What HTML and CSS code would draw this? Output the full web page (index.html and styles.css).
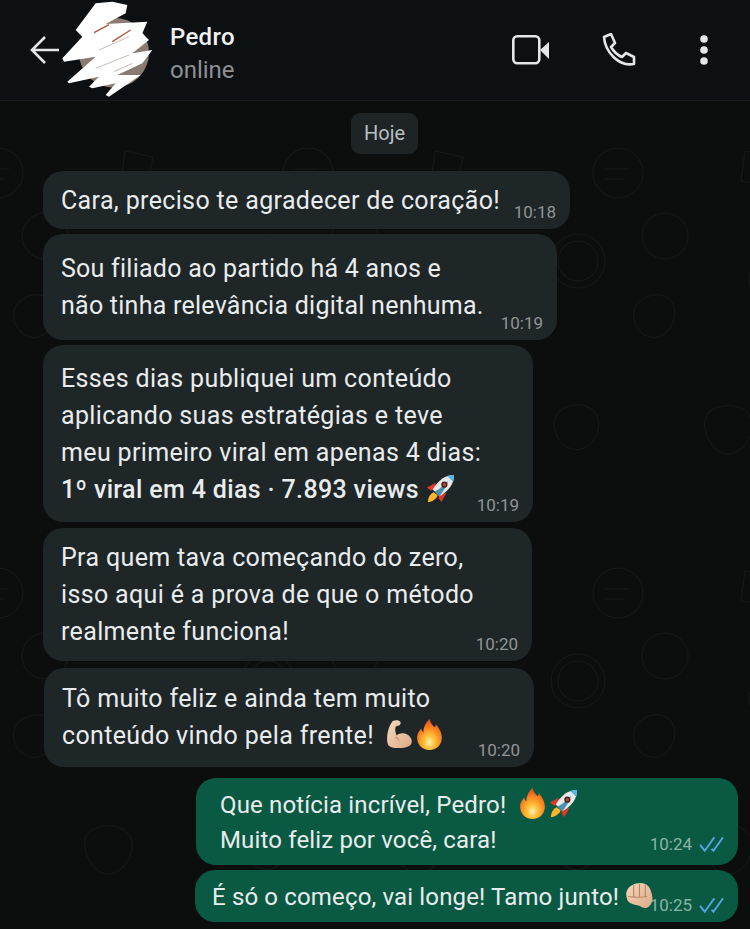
FILE: index.html
```html
<!DOCTYPE html>
<html lang="pt-BR">
<head>
    <meta charset="UTF-8">
    <meta name="viewport" content="width=device-width, initial-scale=1.0">
    <title>Pedro</title>
    <link rel="stylesheet" href="styles.css">
</head>
<body>
    <svg width="0" height="0" class="defs">
        <defs>
            <radialGradient id="flame" cx="50%" cy="75%" r="70%">
                <stop offset="0" stop-color="#fff0b0"/>
                <stop offset="0.3" stop-color="#ffc23a"/>
                <stop offset="0.7" stop-color="#f9801f"/>
                <stop offset="1" stop-color="#ea4f1a"/>
            </radialGradient>
            <linearGradient id="skin" x1="0" y1="0" x2="1" y2="1">
                <stop offset="0" stop-color="#f6d8bd"/>
                <stop offset="1" stop-color="#dcaa87"/>
            </linearGradient>
            <symbol id="fire" viewBox="0 0 26 30">
                <path fill="url(#flame)" d="M13 0c1 4 3 6 5 8 1-1 1-2 1-3 4 4 6 9 6 13 0 7-5 12-12 12S1 25 1 18c0-4 2-6 4-9 0 2 1 3 2 4 0-5 2-9 6-13z"/>
            </symbol>
            <symbol id="rocket" viewBox="0 0 30 30">
                <path fill="#d9382a" d="M10 9 1 14l4 3 5-1zM21 20l-5 9-3-4 1-5z"/>
                <path fill="#ffb52e" d="M8 19c-3 1-6 5-6 10 4 0 9-3 10-7z"/>
                <path fill="#e6e8ea" d="M29 1C20 1 13 6 7 16l7 7c10-6 15-13 15-22z"/>
                <path fill="#4c8fb0" d="M9 18c5-2 10-7 14-11-2 6-5 11-9 16z"/>
                <path fill="#5ab3dc" d="M29 1c-2 0-5 0-7 1l6 6c1-2 1-5 1-7z"/>
                <circle cx="19" cy="11" r="3.2" fill="#4a241c"/>
                <circle cx="19" cy="11" r="1.6" fill="#a8503c"/>
            </symbol>
            <symbol id="muscle" viewBox="0 0 30 30">
                <path fill="url(#skin)" d="M9 1c3-1 7-1 8 1 1 2-1 4-3 4l-2 1c-1 3 0 6 1 9 3-3 8-3 11-1 4 2 6 7 4 10-2 3-8 4-13 4-5 0-10-1-11-4C2 19 4 7 9 1z"/>
                <path fill="#c9946f" d="M13 17c2 2 3 3 3 6-1-2-2-4-5-5z"/>
            </symbol>
            <symbol id="fist" viewBox="0 0 30 30">
                <path fill="url(#skin)" d="M2 10c2-5 8-8 14-8 6 0 10 4 11 9 1 3 2 7 1 10-1 4-4 7-7 7-3 0-5-2-8-3-5-1-10-2-11-7-1-3-1-6 0-8z"/>
                <path fill="none" stroke="#b98562" stroke-width="1.2" d="M9 4v12M15 3v13M21 4v12M3 16c6 1 14 1 20 0"/>
            </symbol>
            <symbol id="ticks" viewBox="0 0 26 16">
                <path fill="none" stroke="#53a6e0" stroke-width="2" d="M1 9l5 6L16 1M13 13l2 2L25 1"/>
            </symbol>
        </defs>
    </svg>

    <header class="topbar">
        <svg class="back" viewBox="0 0 29 28" width="29" height="28"><path fill="none" stroke="#e4e6e7" stroke-width="2.6" d="M29 14H3M15 1 2 14l13 13"/></svg>
        <div class="avatar">
            <svg viewBox="180 0 288 300" width="96" height="100">
                <circle cx="345" cy="158" r="105" fill="#8a7b72"/>
                <path fill="#fff" d="M290 10 340 5 385 15 380 40 320 72 445 65 430 100 450 120 400 160 460 150 430 190 355 225 425 225 330 290 320 285 350 250 280 265 270 260 300 230 210 250 205 245 290 170 195 185 190 175 250 110 230 90z"/>
                <path fill="none" stroke="#a9583f" stroke-width="4" d="M285 98 330 74M340 125 395 90"/>
                <path fill="none" stroke="#a89a92" stroke-width="2" d="M300 150 390 110M290 205 390 165M345 215 400 190"/>
            </svg>
        </div>
        <div class="contact">
            <div class="contact-name">Pedro</div>
            <div class="contact-status">online</div>
        </div>
        <div class="actions">
            <svg viewBox="0 0 37 30" width="37" height="30"><rect x="1.3" y="1.3" width="26" height="27" rx="4" fill="none" stroke="#e4e6e7" stroke-width="2.6"/><path fill="#e4e6e7" d="M28 15l9-8v17z"/></svg>
            <svg class="phone" viewBox="0 0 34 34" width="34" height="34"><path fill="none" stroke="#e4e6e7" stroke-width="2.6" stroke-linejoin="round" d="M2 4l7-3 4 9-4 4c3 5 6 8 11 10l4-4 8 4v7C17 34 3 19 2 4z"/></svg>
            <svg viewBox="0 0 8 30" width="8" height="30"><circle cx="4" cy="4" r="3.8" fill="#e4e6e7"/><circle cx="4" cy="15" r="3.8" fill="#e4e6e7"/><circle cx="4" cy="26" r="3.8" fill="#e4e6e7"/></svg>
        </div>
    </header>

    <main class="chat">
        <div class="day">Hoje</div>

        <div class="msg in w1">
            <div class="text">Cara, preciso te agradecer de coração!</div>
            <div class="meta">10:18</div>
        </div>
        <div class="msg in w2">
            <div class="text">Sou filiado ao partido há 4 anos e<br>não tinha relevância digital nenhuma.</div>
            <div class="meta">10:19</div>
        </div>
        <div class="msg in w3">
            <div class="text">Esses dias publiquei um conteúdo<br>aplicando suas estratégias e teve<br>meu primeiro viral em apenas 4 dias:<br><strong>1º viral em 4 dias · 7.893 views</strong> <svg class="emoji"><use href="#rocket"/></svg></div>
            <div class="meta">10:19</div>
        </div>
        <div class="msg in w4">
            <div class="text">Pra quem tava começando do zero,<br>isso aqui é a prova de que o método<br>realmente funciona!</div>
            <div class="meta">10:20</div>
        </div>
        <div class="msg in w5">
            <div class="text">Tô muito feliz e ainda tem muito<br>conteúdo vindo pela frente! <svg class="emoji"><use href="#muscle"/></svg><svg class="emoji"><use href="#fire"/></svg></div>
            <div class="meta">10:20</div>
        </div>
        <div class="msg out w6">
            <div class="text">Que notícia incrível, Pedro! <svg class="emoji"><use href="#fire"/></svg><svg class="emoji"><use href="#rocket"/></svg><br>Muito feliz por você, cara!</div>
            <div class="meta">10:24<svg class="ticks"><use href="#ticks"/></svg></div>
        </div>
        <div class="msg out w7">
            <div class="text">É só o começo, vai longe! Tamo junto! <svg class="emoji"><use href="#fist"/></svg></div>
            <div class="meta">10:25<svg class="ticks"><use href="#ticks"/></svg></div>
        </div>
    </main>
</body>
</html>
```

FILE: styles.css
```css
html, body {
    margin: 0;
    padding: 0;
}
body {
    width: 750px;
    height: 929px;
    overflow: hidden;
    background: #0c0d0d;
    color: #e9eced;
    font-family: Roboto, "Liberation Sans", sans-serif;
}
.defs {
    display: block;
    height: 0;
}
.topbar {
    display: flex;
    align-items: center;
    height: 101px;
    box-sizing: border-box;
    padding-left: 30px;
    background: #0c1013;
    border-bottom: 1px solid #1a1c1d;
}
.back {
    flex: none;
}
.avatar {
    width: 96px;
    height: 100px;
    flex: none;
}
.contact {
    margin-left: 15px;
    padding-top: 7px;
}
.contact-name {
    font-size: 24px;
    font-weight: 500;
    letter-spacing: 0.3px;
    line-height: 32px;
    color: #f0f2f2;
}
.contact-status {
    font-size: 24px;
    line-height: 34px;
    color: #8c9194;
}
.actions {
    display: flex;
    align-items: center;
    margin-left: auto;
    margin-right: 42px;
}
.phone {
    margin: 0 64px 0 53px;
}
.chat {
    display: flex;
    flex-direction: column;
    align-items: flex-start;
    height: 828px;
    box-sizing: border-box;
    padding: 12px 12px 0 43px;
    background-image: url("data:image/svg+xml,%3Csvg xmlns='http://www.w3.org/2000/svg' width='310' height='420' fill='none' stroke='%23161819' stroke-width='1'%3E%3Ccircle cx='98' cy='62' r='25'/%3E%3Ccircle cx='58' cy='150' r='27'/%3E%3Ccircle cx='58' cy='150' r='20'/%3E%3Ccircle cx='145' cy='125' r='23'/%3E%3Cpath d='M85 58h24M85 68h20M120 190c12-10 30-8 34 6s-8 34-24 30-22-26-10-36zM225 40l28 6-6 28-26-4zM235 155c14-8 36-6 38 8s-18 32-32 24-16-24-6-32zM40 300c12-10 34-8 38 8s-10 34-26 30-24-28-12-38zM190 300c16-10 40-6 42 12s-16 36-30 30-24-32-12-42z'/%3E%3C/svg%3E");
    background-position: 520px 10px;
}
.day {
    align-self: flex-start;
    margin: 0 0 17px 308px;
    padding: 0 13px;
    height: 41px;
    line-height: 41px;
    border-radius: 9px;
    background: #1e2326;
    color: #b9bec0;
    font-size: 20px;
}
.msg {
    display: flex;
    justify-content: space-between;
    align-items: flex-end;
    box-sizing: border-box;
    border-radius: 20px;
    padding: 10.5px 14px 6px 18px;
    margin-bottom: 5px;
    background: #1f2628;
}
.msg.out {
    background: #0a5a43;
    align-self: flex-end;
    padding: 9.5px 14px 6px 24px;
}
.text {
    flex: 1;
    min-width: 0;
    font-size: 25px;
    letter-spacing: 0.35px;
    line-height: 37px;
    white-space: nowrap;
}
.out .text {
    font-size: 24px;
    letter-spacing: 0.15px;
    line-height: 35px;
    margin-bottom: 1.5px;
}
.text strong {
    font-weight: 500;
}
.w1 { width: 527px; }
.w1 .text { margin-bottom: 4.5px; }
.w2 { width: 514px; padding-top: 15.5px; }
.w2 .text { margin-bottom: 10.5px; letter-spacing: 0.25px; }
.w3 { width: 490px; padding-top: 14.5px; margin-bottom: 6px; }
.w3 .text { margin-bottom: 8.5px; }
.w4 { width: 489px; padding-top: 11px; margin-bottom: 7px; }
.w4 .text { margin-bottom: 5px; }
.w5 { width: 490px; margin-left: 1px; padding-top: 12px; margin-bottom: 11px; }
.w5 .text { margin-bottom: 7px; }
.w5 .emoji:first-of-type { margin-left: 3px; }
.w6 { width: 542px; }
.w6 .emoji:first-of-type { margin-left: 6px; }
.w6 .meta { margin-bottom: 4px; }
.msg.w7 { width: 543px; padding-left: 17px; }
.meta {
    flex: none;
    font-size: 17px;
    line-height: 22px;
    color: #8f9597;
    white-space: nowrap;
}
.out .meta {
    color: #8ab3a5;
}
.emoji {
    width: 29px;
    height: 31px;
    vertical-align: -6px;
}
.emoji + .emoji {
    margin-left: 2px;
}
.ticks {
    width: 25px;
    height: 16px;
    margin-left: 7px;
    vertical-align: -2px;
}
```
